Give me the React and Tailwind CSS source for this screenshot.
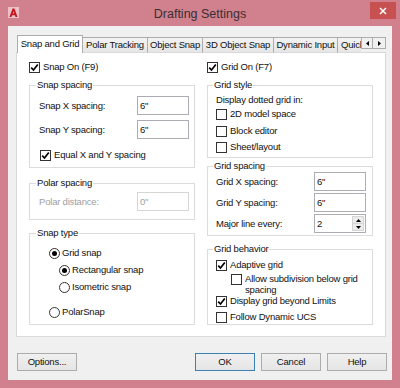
import { useState } from 'react'

const FONT = "font-['Liberation_Sans',Arial,sans-serif]"

const Check = ({ checked }) => (
  <span className="w-[11px] h-[11px] shrink-0 border border-[#333] bg-white flex items-center justify-center">
    {checked && (
      <svg width="9" height="9" viewBox="0 0 9 9">
        <path d="M1.2 4.6 L3.5 7 L7.8 1.4" fill="none" stroke="#000" strokeWidth="1.7" />
      </svg>
    )}
  </span>
)

const Radio = ({ on }) => (
  <span className="w-[11px] h-[11px] shrink-0 rounded-full border border-[#333] bg-white flex items-center justify-center">
    {on && <span className="w-[5px] h-[5px] rounded-full bg-black" />}
  </span>
)

const CheckRow = ({ checked, label, className = '' }) => (
  <div className={`flex items-center gap-[3px] whitespace-nowrap ${className}`}>
    <Check checked={checked} />
    <span>{label}</span>
  </div>
)

const RadioRow = ({ on, label, className = '' }) => (
  <div className={`flex items-center gap-[2px] h-[16px] whitespace-nowrap ${className}`}>
    <Radio on={on} />
    <span>{label}</span>
  </div>
)

const Field = ({ value, disabled, spin }) => (
  <div
    className={`ml-auto w-[52px] h-[19px] flex border bg-white ${
      disabled ? 'border-[#d6d6d6] text-[#a0a0a0]' : 'border-[#abadb3]'
    }`}
  >
    <span className="flex-1 pl-[2px] leading-[17px]">{value}</span>
    {spin && (
      <div className="w-[12px] flex flex-col my-[1px] mr-[1px]">
        <div className="flex-1 bg-[#ececec] border border-[#d4d4d4] flex items-center justify-center">
          <svg width="5" height="3" viewBox="0 0 5 3"><path d="M0 3 L2.5 0 L5 3 Z" fill="#000" /></svg>
        </div>
        <div className="flex-1 bg-[#ececec] border border-t-0 border-[#d4d4d4] flex items-center justify-center">
          <svg width="5" height="3" viewBox="0 0 5 3"><path d="M0 0 L2.5 3 L5 0 Z" fill="#000" /></svg>
        </div>
      </div>
    )}
  </div>
)

const Group = ({ title, className = '', children }) => (
  <fieldset className={`border border-[#dcdcdc] ${className}`}>
    <legend className="ml-[-3px] px-[1px] leading-[12px]">{title}</legend>
    {children}
  </fieldset>
)

const Tab = ({ label, active, w }) =>
  active ? (
    <div className={`${w} h-[18px] bg-white border border-b-0 border-[#acacac] flex items-start justify-center pt-[2px] whitespace-nowrap`}>
      {label}
    </div>
  ) : (
    <div
      className={`${w} h-[16px] bg-gradient-to-b from-[#f3f3f3] to-[#e6e6e6] border border-l-0 border-[#acacac] border-b-[#d9d9d9] flex items-center justify-center overflow-hidden whitespace-nowrap`}
    >
      {label}
    </div>
  )

const Btn = ({ label, primary }) => (
  <button
    className={`w-[60px] h-[18px] border bg-gradient-to-b from-[#f0f0f0] to-[#e5e5e5] leading-[16px] ${
      primary ? 'border-[#3c7fb1]' : 'border-[#acacac]'
    }`}
  >
    {label}
  </button>
)

export default function App() {
  const [tab] = useState('snap')

  return (
    <div className={`w-[400px] h-[388px] bg-[#d1808e] flex flex-col text-[9.5px] tracking-[-0.2px] leading-[12px] text-[#111] ${FONT}`}>
      {/* title bar */}
      <div className="h-[26px] flex items-start shrink-0">
        <div className="w-[30px] pl-[8px] pt-[7px]">
          <div className="w-[11px] h-[11px] bg-[#ecc1c8] flex items-center justify-center">
            <svg width="9" height="9" viewBox="0 0 10 10">
              <path
                fillRule="evenodd"
                d="M0.5 10 L4 0.5 L6 0.5 L9.5 10 L7.3 10 L6.6 8 L3.4 8 L2.7 10 Z M4.1 6.2 L5.9 6.2 L5 3.5 Z"
                fill="#c4161c"
              />
            </svg>
          </div>
        </div>
        <div className="flex-1 text-center pt-[7px] text-[12.5px] tracking-normal leading-[14px] text-[#3a2f31]">
          Drafting Settings
        </div>
        <div className="w-[30px] pt-[2px]">
          <div className="w-[26px] h-[17px] bg-[#c75050] flex items-center justify-center">
            <svg width="8" height="8" viewBox="0 0 8 8">
              <path d="M1 1 L7 7 M7 1 L1 7" stroke="#fff" strokeWidth="1.5" />
            </svg>
          </div>
        </div>
      </div>

      {/* client */}
      <div className="mx-[8px] mb-[8px] flex-1 bg-[#f0f0f0] flex flex-col pt-[9px] pl-[8px]">
        <div className="flex items-end h-[18px] ml-[1px] mb-[-1px] relative z-10">
          <Tab label="Snap and Grid" active={tab === 'snap'} w="w-[66px]" />
          <Tab label="Polar Tracking" w="w-[65px]" />
          <Tab label="Object Snap" w="w-[55px]" />
          <Tab label="3D Object Snap" w="w-[71px]" />
          <Tab label="Dynamic Input" w="w-[64px]" />
          <div className="w-[23px] h-[16px] bg-gradient-to-b from-[#f3f3f3] to-[#e6e6e6] border-t border-[#acacac] border-b border-b-[#d9d9d9] overflow-hidden whitespace-nowrap pl-[3px] leading-[14px]">
            Quick Properties
          </div>
          <div className="self-start mt-[2px] flex">
            <div className="w-[12px] h-[12px] bg-[#f0f0f0] border border-[#acacac] flex items-center justify-center">
              <svg width="3" height="5" viewBox="0 0 3 5"><path d="M3 0 L0 2.5 L3 5 Z" fill="#000" /></svg>
            </div>
            <div className="w-[13px] h-[12px] bg-[#f0f0f0] border border-l-0 border-[#acacac] flex items-center justify-center">
              <svg width="3" height="5" viewBox="0 0 3 5"><path d="M0 0 L3 2.5 L0 5 Z" fill="#000" /></svg>
            </div>
          </div>
        </div>

        <div className="w-[370px] h-[285px] bg-white border border-[#d9d9d9] flex gap-[12px] px-[12px] pt-[7px]">
          {/* left column */}
          <div className="w-[166px] flex flex-col">
            <CheckRow checked label="Snap On (F9)" className="h-[14px]" />
            <Group title="Snap spacing" className="mt-[5px] pl-[9px] pr-[5px] pb-[5px]">
              <div className="flex items-center h-[19px] mt-[5px]">
                <span>Snap X spacing:</span>
                <Field value={'6"'} />
              </div>
              <div className="flex items-center h-[19px] mt-[5px]">
                <span>Snap Y spacing:</span>
                <Field value={'6"'} />
              </div>
              <CheckRow checked label="Equal X and Y spacing" className="h-[14px] mt-[9px] ml-[1px]" />
            </Group>
            <Group title="Polar spacing" className="mt-[9px] pl-[9px] pr-[5px] pb-[8px]">
              <div className="flex items-center h-[19px] mt-[3px]">
                <span className="text-[#a0a0a0]">Polar distance:</span>
                <Field value={'0"'} disabled />
              </div>
            </Group>
            <Group title="Snap type" className="mt-[7px] pl-[9px] pr-[5px] pb-[4px]">
              <RadioRow on label="Grid snap" className="mt-[6px] ml-[10px]" />
              <RadioRow on label="Rectangular snap" className="mt-[1px] ml-[20px]" />
              <RadioRow label="Isometric snap" className="mt-[1px] ml-[20px]" />
              <RadioRow label="PolarSnap" className="mt-[9px] ml-[10px]" />
            </Group>
          </div>

          {/* right column */}
          <div className="w-[166px] flex flex-col">
            <CheckRow checked label="Grid On (F7)" className="h-[14px]" />
            <Group title="Grid style" className="mt-[5px] pl-[8px] pr-[6px] pb-[2px]">
              <div className="h-[13px] mt-[2px] flex items-center">Display dotted grid in:</div>
              <CheckRow label="2D model space" className="h-[16px]" />
              <CheckRow label="Block editor" className="h-[16px] mt-[1px]" />
              <CheckRow label="Sheet/layout" className="h-[16px]" />
            </Group>
            <Group title="Grid spacing" className="mt-[2px] pl-[8px] pr-[6px] pb-[2px]">
              <div className="flex items-center h-[19px]">
                <span>Grid X spacing:</span>
                <Field value={'6"'} />
              </div>
              <div className="flex items-center h-[19px] mt-[2px]">
                <span>Grid Y spacing:</span>
                <Field value={'6"'} />
              </div>
              <div className="flex items-center h-[19px] mt-[2px]">
                <span>Major line every:</span>
                <Field value="2" spin />
              </div>
            </Group>
            <Group title="Grid behavior" className="mt-[7px] pl-[8px] pr-[6px] pb-[1px]">
              <CheckRow checked label="Adaptive grid" className="h-[14px] mt-[3px]" />
              <div className="flex items-start gap-[3px] mt-[1px] ml-[15px] leading-[11px] whitespace-nowrap">
                <span className="mt-[1px]"><Check /></span>
                <span>
                  Allow subdivision below grid
                  <br />
                  spacing
                </span>
              </div>
              <CheckRow checked label="Display grid beyond Limits" className="h-[12px]" />
              <CheckRow label="Follow Dynamic UCS" className="h-[12px] mt-[4px]" />
            </Group>
          </div>
        </div>

        <div className="flex mt-[16px] pl-[1px] pr-[5px]">
          <Btn label="Options..." />
          <div className="ml-auto flex gap-[6px]">
            <Btn label="OK" primary />
            <Btn label="Cancel" />
            <Btn label="Help" />
          </div>
        </div>
      </div>
    </div>
  )
}
